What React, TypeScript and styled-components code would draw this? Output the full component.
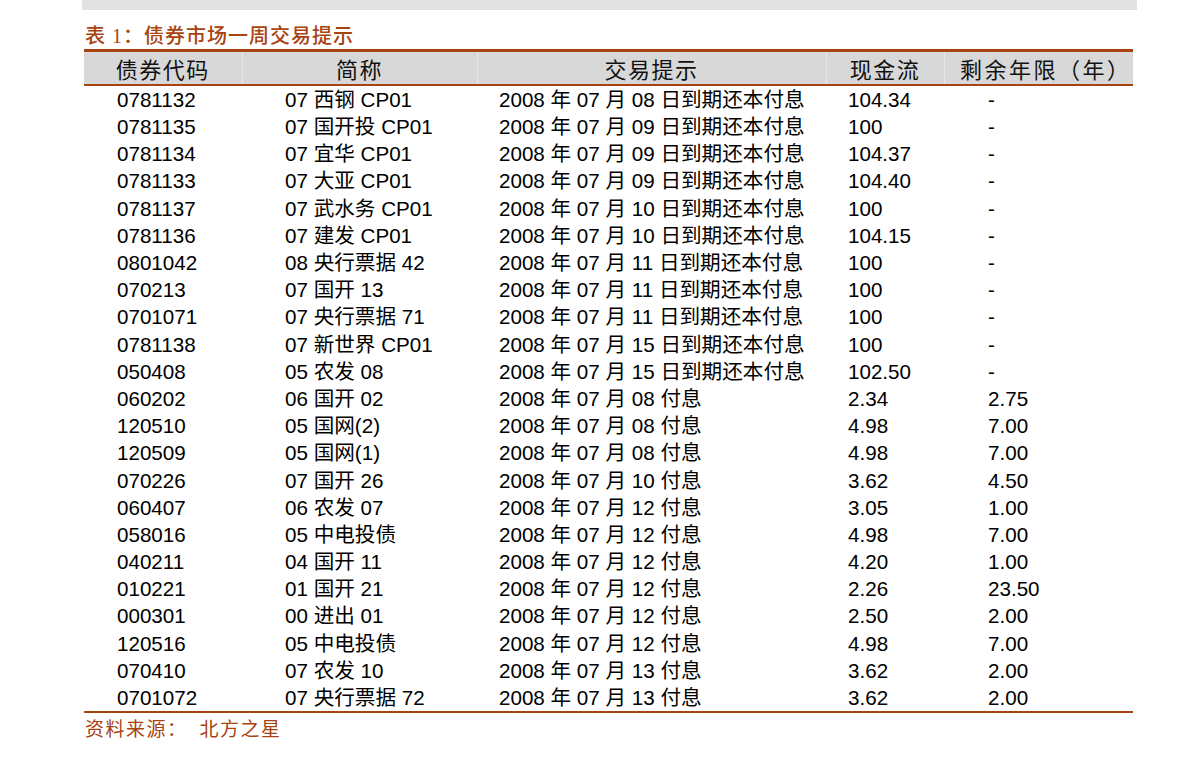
import React from "react"
import styled, { createGlobalStyle } from "styled-components"

const GlobalStyle = createGlobalStyle`
  html, body {
    margin: 0;
    padding: 0;
    background: #fff;
  }
`

const BRAND = "#a8420f"
const CJK = `"Liberation Sans", "Noto Sans CJK SC", sans-serif`

const Page = styled.div`
  width: 1191px;
  height: 760px;
  overflow: hidden;
  font-family: ${CJK};
`

const TopBar = styled.div`
  margin-left: 82px;
  width: 1055px;
  height: 10px;
  background: #e1e1e1;
`

const Section = styled.section`
  margin-left: 84px;
  width: 1049px;
`

const Caption = styled.h3`
  margin: 13px 0 0 1px;
  height: 26px;
  line-height: 26px;
  font-size: 20px;
  font-weight: 500;
  color: ${BRAND};
  font-family: "Liberation Serif", "Noto Sans CJK SC", serif;
  letter-spacing: 1px;
`

const Table = styled.table`
  width: 100%;
  border-collapse: collapse;
  table-layout: fixed;
  border-top: 3px solid ${BRAND};
  border-bottom: 2px solid ${BRAND};
`

const HeadRow = styled.tr`
  background: #d8d8d8;
  border-bottom: 2px solid ${BRAND};
`

const Th = styled.th`
  height: 31px;
  padding: 0;
  font-size: 22px;
  font-weight: 400;
  color: #111;
  text-align: center;
  letter-spacing: 1.5px;
  border-left: 1px solid #e8e8e8;
  &:first-child {
    border-left: none;
  }
  &:last-child {
    padding-left: 14px;
    letter-spacing: 2.5px;
  }
`

const Row = styled.tr`
  height: 27.2px;
`

const Td = styled.td<{ $pad: number }>`
  padding: 0 0 0 ${p => p.$pad}px;
  font-size: 20.6px;
  line-height: 27px;
  color: #000;
  white-space: nowrap;
  vertical-align: middle;
`

const Source = styled.p`
  margin: 1px 0 0 1px;
  font-size: 19px;
  color: ${BRAND};
  font-family: "Liberation Serif", "Noto Sans CJK SC", serif;
  letter-spacing: 1.5px;
  span {
    margin-left: 12px;
  }
`

const columns = [
  { title: "债券代码", width: 158, pad: 33 },
  { title: "简称", width: 235, pad: 43 },
  { title: "交易提示", width: 349, pad: 22 },
  { title: "现金流", width: 118, pad: 22 },
  { title: "剩余年限（年）", width: 189, pad: 44 },
]

const rows: string[][] = [
  ["0781132", "07 西钢 CP01", "2008 年 07 月 08 日到期还本付息", "104.34", "-"],
  ["0781135", "07 国开投 CP01", "2008 年 07 月 09 日到期还本付息", "100", "-"],
  ["0781134", "07 宜华 CP01", "2008 年 07 月 09 日到期还本付息", "104.37", "-"],
  ["0781133", "07 大亚 CP01", "2008 年 07 月 09 日到期还本付息", "104.40", "-"],
  ["0781137", "07 武水务 CP01", "2008 年 07 月 10 日到期还本付息", "100", "-"],
  ["0781136", "07 建发 CP01", "2008 年 07 月 10 日到期还本付息", "104.15", "-"],
  ["0801042", "08 央行票据 42", "2008 年 07 月 11 日到期还本付息", "100", "-"],
  ["070213", "07 国开 13", "2008 年 07 月 11 日到期还本付息", "100", "-"],
  ["0701071", "07 央行票据 71", "2008 年 07 月 11 日到期还本付息", "100", "-"],
  ["0781138", "07 新世界 CP01", "2008 年 07 月 15 日到期还本付息", "100", "-"],
  ["050408", "05 农发 08", "2008 年 07 月 15 日到期还本付息", "102.50", "-"],
  ["060202", "06 国开 02", "2008 年 07 月 08 付息", "2.34", "2.75"],
  ["120510", "05 国网(2)", "2008 年 07 月 08 付息", "4.98", "7.00"],
  ["120509", "05 国网(1)", "2008 年 07 月 08 付息", "4.98", "7.00"],
  ["070226", "07 国开 26", "2008 年 07 月 10 付息", "3.62", "4.50"],
  ["060407", "06 农发 07", "2008 年 07 月 12 付息", "3.05", "1.00"],
  ["058016", "05 中电投债", "2008 年 07 月 12 付息", "4.98", "7.00"],
  ["040211", "04 国开 11", "2008 年 07 月 12 付息", "4.20", "1.00"],
  ["010221", "01 国开 21", "2008 年 07 月 12 付息", "2.26", "23.50"],
  ["000301", "00 进出 01", "2008 年 07 月 12 付息", "2.50", "2.00"],
  ["120516", "05 中电投债", "2008 年 07 月 12 付息", "4.98", "7.00"],
  ["070410", "07 农发 10", "2008 年 07 月 13 付息", "3.62", "2.00"],
  ["0701072", "07 央行票据 72", "2008 年 07 月 13 付息", "3.62", "2.00"],
]

const App: React.FC = () => {
  return (
    <Page>
      <GlobalStyle />
      <TopBar />
      <Section>
        <Caption>表 1：债券市场一周交易提示</Caption>
        <Table>
          <colgroup>
            {columns.map(c => (
              <col key={c.title} style={{ width: c.width }} />
            ))}
          </colgroup>
          <thead>
            <HeadRow>
              {columns.map(c => (
                <Th key={c.title}>{c.title}</Th>
              ))}
            </HeadRow>
          </thead>
          <tbody>
            {rows.map(r => (
              <Row key={r[0]}>
                {r.map((cell, i) => (
                  <Td key={i} $pad={columns[i].pad}>{cell}</Td>
                ))}
              </Row>
            ))}
          </tbody>
        </Table>
        <Source>
          资料来源：<span>北方之星</span>
        </Source>
      </Section>
    </Page>
  )
}

export default App
